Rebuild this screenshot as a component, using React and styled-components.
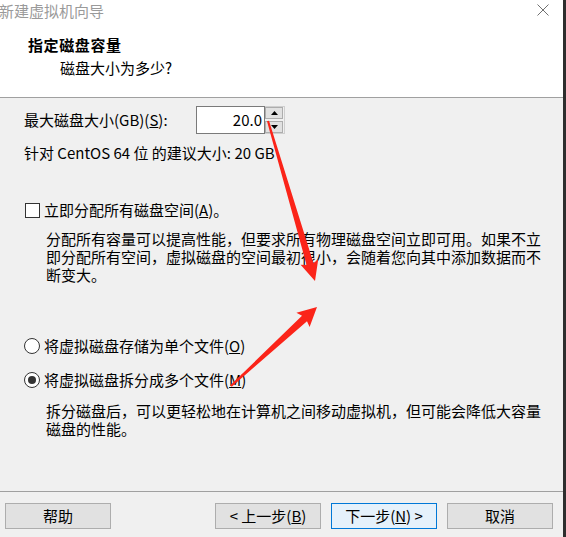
import React from "react";
import styled, { createGlobalStyle } from "styled-components";

const GlobalStyle = createGlobalStyle`
  html, body { margin: 0; padding: 0; background: #2e2e2e; }
  body { font-family: "Noto Sans CJK SC", "Noto Sans", sans-serif; }
`;

const Window = styled.div`
  position: relative;
  width: 566px;
  height: 537px;
  display: flex;
  overflow: hidden;
  background: #2e2e2e;
`;

const Dialog = styled.div`
  width: 563px;
  height: 537px;
  display: flex;
  flex-direction: column;
  background: #f0f0f0;
  color: #000;
  font-size: 15px;
  line-height: 18px;
`;

const TitleBar = styled.div`
  height: 22px;
  display: flex;
  align-items: flex-start;
  justify-content: space-between;
  background: #fff;
  padding: 0 14px 0 0;
`;

const TitleText = styled.div`
  margin-left: -1px;
  padding-top: 2px;
  color: #9a9a9a;
`;

const CloseIcon = styled.svg`
  margin-top: 4px;
  width: 12px;
  height: 12px;
`;

const Header = styled.div`
  background: #fff;
  padding: 14px 0 20px 28px;
  border-bottom: 1px solid #a0a0a0;
  display: flex;
  flex-direction: column;
  gap: 5px;
`;

const HeaderTitle = styled.div`
  font-weight: 700;
  letter-spacing: 0.6px;
`;

const HeaderSub = styled.div`
  margin-left: 32px;
`;

const Body = styled.div`
  flex: 1;
  padding: 8px 0 0 24px;
  display: flex;
  flex-direction: column;
`;

const SizeRow = styled.div`
  display: grid;
  grid-template-columns: 172px auto auto;
  justify-content: start;
  align-items: center;
  height: 28px;
`;

const NumberField = styled.div`
  box-sizing: border-box;
  width: 69px;
  height: 28px;
  border: 1px solid #7a7a7a;
  background: #fff;
  text-align: right;
  padding-right: 2px;
  line-height: 26px;
`;

const Spinner = styled.div`
  box-sizing: border-box;
  width: 20px;
  height: 28px;
  border: 1px solid #cfcfcf;
  border-left: none;
  display: flex;
  flex-direction: column;
  justify-content: space-between;
  padding: 0 1px 0 0;
`;

const SpinButton = styled.div`
  box-sizing: border-box;
  height: 12px;
  background: #e1e1e1;
  border: 1px solid #adadad;
  display: flex;
  align-items: center;
  justify-content: center;
`;

const Line = styled.div`
  margin-top: ${(p) => p.$mt || 0}px;
  margin-left: ${(p) => p.$ml || 0}px;
`;

const OptionRow = styled.label`
  margin-top: ${(p) => p.$mt || 0}px;
  margin-left: ${(p) => p.$ml || 0}px;
  display: flex;
  align-items: center;
  gap: 4px;
  height: 18px;
`;

const CheckBox = styled.span`
  box-sizing: border-box;
  width: 15px;
  height: 15px;
  border: 1px solid #333;
  background: #fff;
  margin-top: 1px;
`;

const RadioCircle = styled.span`
  box-sizing: border-box;
  width: 16px;
  height: 16px;
  border-radius: 50%;
  border: 1px solid #333;
  background: #fff;
  display: flex;
  align-items: center;
  justify-content: center;
  margin-top: -1px;
  &::after {
    content: "";
    width: 8px;
    height: 8px;
    border-radius: 50%;
    background: ${(p) => (p.$checked ? "#333" : "transparent")};
  }
`;

const Para = styled.p`
  margin: ${(p) => p.$mt}px 0 0 22px;
  width: 500px;
`;

const Key = styled.span`
  text-decoration: underline;
  text-underline-offset: 1px;
`;

const Footer = styled.div`
  box-sizing: border-box;
  height: 46px;
  border-top: 1px solid #a0a0a0;
  padding: 11px 10px 0 5px;
  display: flex;
  gap: 10px;
`;

const Button = styled.div`
  box-sizing: border-box;
  width: 106px;
  height: 26px;
  border: 1px solid ${(p) => (p.$primary ? "#0078d7" : "#adadad")};
  background: ${(p) => (p.$primary ? "#e5f1fb" : "#e1e1e1")};
  line-height: 24px;
  text-align: center;
  margin-right: ${(p) => (p.$push ? "auto" : "0")};
`;

const Overlay = styled.svg`
  position: absolute;
  left: 0;
  top: 0;
  width: 566px;
  height: 537px;
  pointer-events: none;
`;

const Tri = ({ up }) => (
  <svg width="7" height="4" viewBox="0 0 7 4">
    <polygon points={up ? "3.5,0 7,4 0,4" : "0,0 7,0 3.5,4"} fill="#000" />
  </svg>
);

export default function App() {
  return (
    <>
      <GlobalStyle />
      <Window>
        <Dialog>
          <TitleBar>
            <TitleText>新建虚拟机向导</TitleText>
            <CloseIcon viewBox="0 0 12 12">
              <path d="M0.5 0.5 L11.5 11.5 M11.5 0.5 L0.5 11.5" stroke="#707070" strokeWidth="1" fill="none" />
            </CloseIcon>
          </TitleBar>
          <Header>
            <HeaderTitle>指定磁盘容量</HeaderTitle>
            <HeaderSub>磁盘大小为多少?</HeaderSub>
          </Header>
          <Body>
            <SizeRow>
              <span>
                最大磁盘大小(GB)(<Key>S</Key>):
              </span>
              <NumberField>20.0</NumberField>
              <Spinner>
                <SpinButton>
                  <Tri up />
                </SpinButton>
                <SpinButton>
                  <Tri />
                </SpinButton>
              </Spinner>
            </SizeRow>
            <Line $mt={10}>针对 CentOS 64 位 的建议大小: 20 GB</Line>
            <OptionRow $mt={39} $ml={1}>
              <CheckBox />
              <span>
                立即分配所有磁盘空间(<Key>A</Key>)。
              </span>
            </OptionRow>
            <Para $mt={11}>
              分配所有容量可以提高性能，但要求所有物理磁盘空间立即可用。如果不立即分配所有空间，虚拟磁盘的空间最初很小，会随着您向其中添加数据而不断变大。
            </Para>
            <OptionRow $mt={53}>
              <RadioCircle />
              <span>
                将虚拟磁盘存储为单个文件(<Key>O</Key>)
              </span>
            </OptionRow>
            <OptionRow $mt={16}>
              <RadioCircle $checked />
              <span>
                将虚拟磁盘拆分成多个文件(<Key>M</Key>)
              </span>
            </OptionRow>
            <Para $mt={13}>
              拆分磁盘后，可以更轻松地在计算机之间移动虚拟机，但可能会降低大容量磁盘的性能。
            </Para>
          </Body>
          <Footer>
            <Button $push>帮助</Button>
            <Button>
              &lt; 上一步(<Key>B</Key>)
            </Button>
            <Button $primary>
              下一步(<Key>N</Key>) &gt;
            </Button>
            <Button>取消</Button>
          </Footer>
        </Dialog>
        <Overlay viewBox="0 0 566 537">
          <polygon
            fill="#fb2419"
            points="267,121.3 306.6,265.1 300.6,264.8 315,281 318.2,259.4 313.4,262.9 269,120.7"
          />
          <polygon
            fill="#fb2419"
            points="231.7,386.7 307,321.2 309.6,327 317,307 296.4,312.8 302,315.8 230.3,385.3"
          />
        </Overlay>
      </Window>
    </>
  );
}
